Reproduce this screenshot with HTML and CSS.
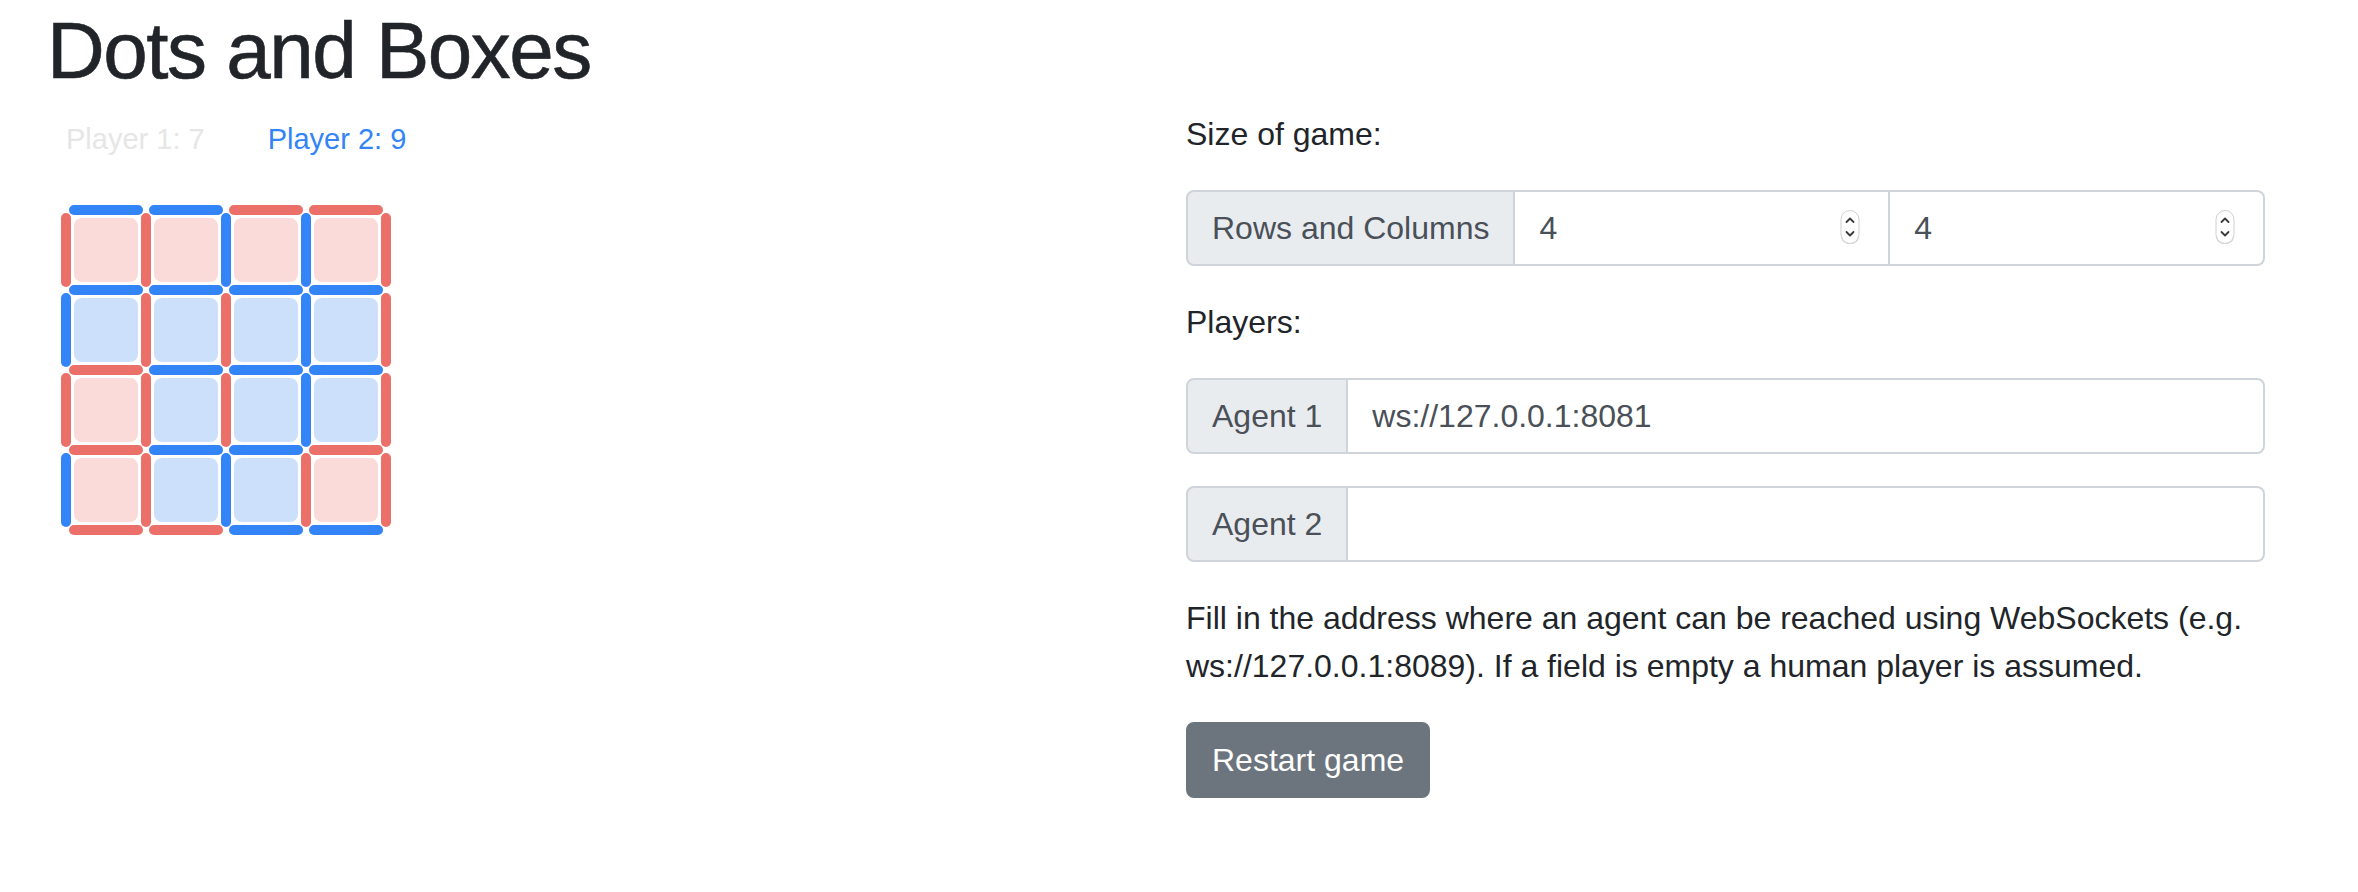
FILE: index.html
```html
<!DOCTYPE html>
<html lang="en">
<head>
<meta charset="utf-8">
<title>Dots and Boxes</title>
<link rel="stylesheet" href="styles.css">
</head>
<body>
<div class="page">
  <h1 class="title">Dots and Boxes</h1>
  <div class="layout">
    <section class="game">
      <div class="scores">
        <span class="score score-p1">Player 1: 7</span>
        <span class="score score-p2">Player 2: 9</span>
      </div>
      <svg class="board" viewBox="0 0 340 340" width="340" height="340" aria-label="Game board">
        <!-- boxes -->
        <rect class="box-r" x="18" y="18" width="64" height="64" rx="8"/>
        <rect class="box-r" x="98" y="18" width="64" height="64" rx="8"/>
        <rect class="box-r" x="178" y="18" width="64" height="64" rx="8"/>
        <rect class="box-r" x="258" y="18" width="64" height="64" rx="8"/>
        <rect class="box-b" x="18" y="98" width="64" height="64" rx="8"/>
        <rect class="box-b" x="98" y="98" width="64" height="64" rx="8"/>
        <rect class="box-b" x="178" y="98" width="64" height="64" rx="8"/>
        <rect class="box-b" x="258" y="98" width="64" height="64" rx="8"/>
        <rect class="box-r" x="18" y="178" width="64" height="64" rx="8"/>
        <rect class="box-b" x="98" y="178" width="64" height="64" rx="8"/>
        <rect class="box-b" x="178" y="178" width="64" height="64" rx="8"/>
        <rect class="box-b" x="258" y="178" width="64" height="64" rx="8"/>
        <rect class="box-r" x="18" y="258" width="64" height="64" rx="8"/>
        <rect class="box-b" x="98" y="258" width="64" height="64" rx="8"/>
        <rect class="box-b" x="178" y="258" width="64" height="64" rx="8"/>
        <rect class="box-r" x="258" y="258" width="64" height="64" rx="8"/>
        <!-- horizontal lines -->
        <rect class="line-b" x="13" y="5" width="74" height="10" rx="5"/>
        <rect class="line-b" x="93" y="5" width="74" height="10" rx="5"/>
        <rect class="line-r" x="173" y="5" width="74" height="10" rx="5"/>
        <rect class="line-r" x="253" y="5" width="74" height="10" rx="5"/>
        <rect class="line-b" x="13" y="85" width="74" height="10" rx="5"/>
        <rect class="line-b" x="93" y="85" width="74" height="10" rx="5"/>
        <rect class="line-b" x="173" y="85" width="74" height="10" rx="5"/>
        <rect class="line-b" x="253" y="85" width="74" height="10" rx="5"/>
        <rect class="line-r" x="13" y="165" width="74" height="10" rx="5"/>
        <rect class="line-b" x="93" y="165" width="74" height="10" rx="5"/>
        <rect class="line-b" x="173" y="165" width="74" height="10" rx="5"/>
        <rect class="line-b" x="253" y="165" width="74" height="10" rx="5"/>
        <rect class="line-r" x="13" y="245" width="74" height="10" rx="5"/>
        <rect class="line-b" x="93" y="245" width="74" height="10" rx="5"/>
        <rect class="line-b" x="173" y="245" width="74" height="10" rx="5"/>
        <rect class="line-r" x="253" y="245" width="74" height="10" rx="5"/>
        <rect class="line-r" x="13" y="325" width="74" height="10" rx="5"/>
        <rect class="line-r" x="93" y="325" width="74" height="10" rx="5"/>
        <rect class="line-b" x="173" y="325" width="74" height="10" rx="5"/>
        <rect class="line-b" x="253" y="325" width="74" height="10" rx="5"/>
        <!-- vertical lines -->
        <rect class="line-r" x="5" y="13" width="10" height="74" rx="5"/>
        <rect class="line-r" x="85" y="13" width="10" height="74" rx="5"/>
        <rect class="line-b" x="165" y="13" width="10" height="74" rx="5"/>
        <rect class="line-b" x="245" y="13" width="10" height="74" rx="5"/>
        <rect class="line-r" x="325" y="13" width="10" height="74" rx="5"/>
        <rect class="line-b" x="5" y="93" width="10" height="74" rx="5"/>
        <rect class="line-r" x="85" y="93" width="10" height="74" rx="5"/>
        <rect class="line-r" x="165" y="93" width="10" height="74" rx="5"/>
        <rect class="line-b" x="245" y="93" width="10" height="74" rx="5"/>
        <rect class="line-r" x="325" y="93" width="10" height="74" rx="5"/>
        <rect class="line-r" x="5" y="173" width="10" height="74" rx="5"/>
        <rect class="line-r" x="85" y="173" width="10" height="74" rx="5"/>
        <rect class="line-r" x="165" y="173" width="10" height="74" rx="5"/>
        <rect class="line-b" x="245" y="173" width="10" height="74" rx="5"/>
        <rect class="line-r" x="325" y="173" width="10" height="74" rx="5"/>
        <rect class="line-b" x="5" y="253" width="10" height="74" rx="5"/>
        <rect class="line-r" x="85" y="253" width="10" height="74" rx="5"/>
        <rect class="line-b" x="165" y="253" width="10" height="74" rx="5"/>
        <rect class="line-r" x="245" y="253" width="10" height="74" rx="5"/>
        <rect class="line-r" x="325" y="253" width="10" height="74" rx="5"/>
      </svg>
    </section>
    <section class="settings">
      <p class="label">Size of game:</p>
      <div class="input-group">
        <span class="addon">Rows and Columns</span>
        <label class="control num-field">
          <input class="num-input" type="text" value="4" aria-label="Rows">
          <svg class="spinner" viewBox="0 0 20 36" width="20" height="36" aria-hidden="true">
            <rect x="1" y="1.5" width="18" height="33" rx="9" fill="#fff" stroke="#cfcfcf" stroke-width="1"/>
            <path d="M1.5 27 Q2 34.5 10 34.5 Q18 34.5 18.5 27" fill="none" stroke="#d8d8d8" stroke-width="1.2"/>
            <path d="M6.5 13 L10 9.5 L13.5 13" fill="none" stroke="#3a3a3a" stroke-width="1.8" stroke-linecap="round" stroke-linejoin="round"/>
            <path d="M6.5 23 L10 26.5 L13.5 23" fill="none" stroke="#3a3a3a" stroke-width="1.8" stroke-linecap="round" stroke-linejoin="round"/>
          </svg>
        </label>
        <label class="control num-field">
          <input class="num-input" type="text" value="4" aria-label="Columns">
          <svg class="spinner" viewBox="0 0 20 36" width="20" height="36" aria-hidden="true">
            <rect x="1" y="1.5" width="18" height="33" rx="9" fill="#fff" stroke="#cfcfcf" stroke-width="1"/>
            <path d="M1.5 27 Q2 34.5 10 34.5 Q18 34.5 18.5 27" fill="none" stroke="#d8d8d8" stroke-width="1.2"/>
            <path d="M6.5 13 L10 9.5 L13.5 13" fill="none" stroke="#3a3a3a" stroke-width="1.8" stroke-linecap="round" stroke-linejoin="round"/>
            <path d="M6.5 23 L10 26.5 L13.5 23" fill="none" stroke="#3a3a3a" stroke-width="1.8" stroke-linecap="round" stroke-linejoin="round"/>
          </svg>
        </label>
      </div>
      <p class="label">Players:</p>
      <div class="input-group">
        <span class="addon">Agent 1</span>
        <input class="control text-input" type="text" value="ws://127.0.0.1:8081" aria-label="Agent 1">
      </div>
      <div class="input-group">
        <span class="addon">Agent 2</span>
        <input class="control text-input" type="text" value="" aria-label="Agent 2">
      </div>
      <p class="help">Fill in the address where an agent can be reached using WebSockets (e.g. ws://127.0.0.1:8089). If a field is empty a human player is assumed.</p>
      <button class="btn" type="button">Restart game</button>
    </section>
  </div>
</div>
</body>
</html>
```

FILE: styles.css
```css
* {
  box-sizing: border-box;
}

html,
body {
  margin: 0;
  padding: 0;
}

body {
  font-family: "Liberation Sans", Arial, Helvetica, sans-serif;
  font-size: 32px;
  line-height: 1.5;
  color: #212529;
  background: #fff;
}

.page {
  padding: 0 93px 0 44px;
}

.title {
  margin: 3px 0 11px;
  padding-left: 3px;
  font-size: 80px;
  font-weight: 500;
  line-height: 1.2;
  letter-spacing: -1.5px;
  -webkit-text-stroke: 0.6px #212529;
}

.layout {
  display: grid;
  grid-template-columns: 1fr 1079px;
  align-items: start;
}

/* ---------- game side ---------- */
.game {
  padding-left: 12px;
}

.scores {
  display: flex;
  gap: 63px;
  padding: 5px 0 0 10px;
  font-size: 29px;
  line-height: 48px;
}

.score-p1 {
  color: #e6e6e6;
}

.score-p2 {
  color: #3384f6;
}

.board {
  display: block;
  margin-top: 37px;
  width: 340px;
  height: 340px;
}

.line-r {
  fill: #ec706a;
}

.line-b {
  fill: #3384f6;
}

.box-r {
  fill: #fadbd9;
}

.box-b {
  fill: #cde0fb;
}

/* ---------- settings side ---------- */
.settings {
  display: flex;
  flex-direction: column;
  align-items: flex-start;
}

.label {
  margin: 0 0 32px;
}

.input-group {
  display: flex;
  width: 100%;
  height: 76px;
  margin-bottom: 32px;
}

.addon {
  display: flex;
  align-items: center;
  padding: 0 24px;
  background: #e9ecef;
  border: 2px solid #ced4da;
  border-radius: 8px 0 0 8px;
  color: #495057;
  white-space: nowrap;
}

.control {
  flex: 1 1 0;
  min-width: 0;
  height: 76px;
  border: 2px solid #ced4da;
  border-left: 0;
  background: #fff;
  color: #495057;
}

.control:last-child {
  border-radius: 0 8px 8px 0;
}

.text-input {
  padding: 0 24px;
  font: inherit;
  color: #495057;
  outline: none;
}

.num-field {
  display: flex;
  align-items: center;
  padding: 0 28px 0 24px;
}

.num-input {
  flex: 1 1 auto;
  min-width: 0;
  border: 0;
  padding: 0;
  margin: 0;
  font: inherit;
  color: #495057;
  background: transparent;
  outline: none;
}

.spinner {
  display: block;
  flex: none;
  width: 20px;
  height: 36px;
  margin-top: -3px;
}

.help {
  margin: 0 0 32px;
}

.btn {
  display: inline-block;
  padding: 12px 24px;
  font: inherit;
  line-height: 48px;
  color: #fff;
  background: #6c757d;
  border: 2px solid #6c757d;
  border-radius: 8px;
  cursor: pointer;
}
```
